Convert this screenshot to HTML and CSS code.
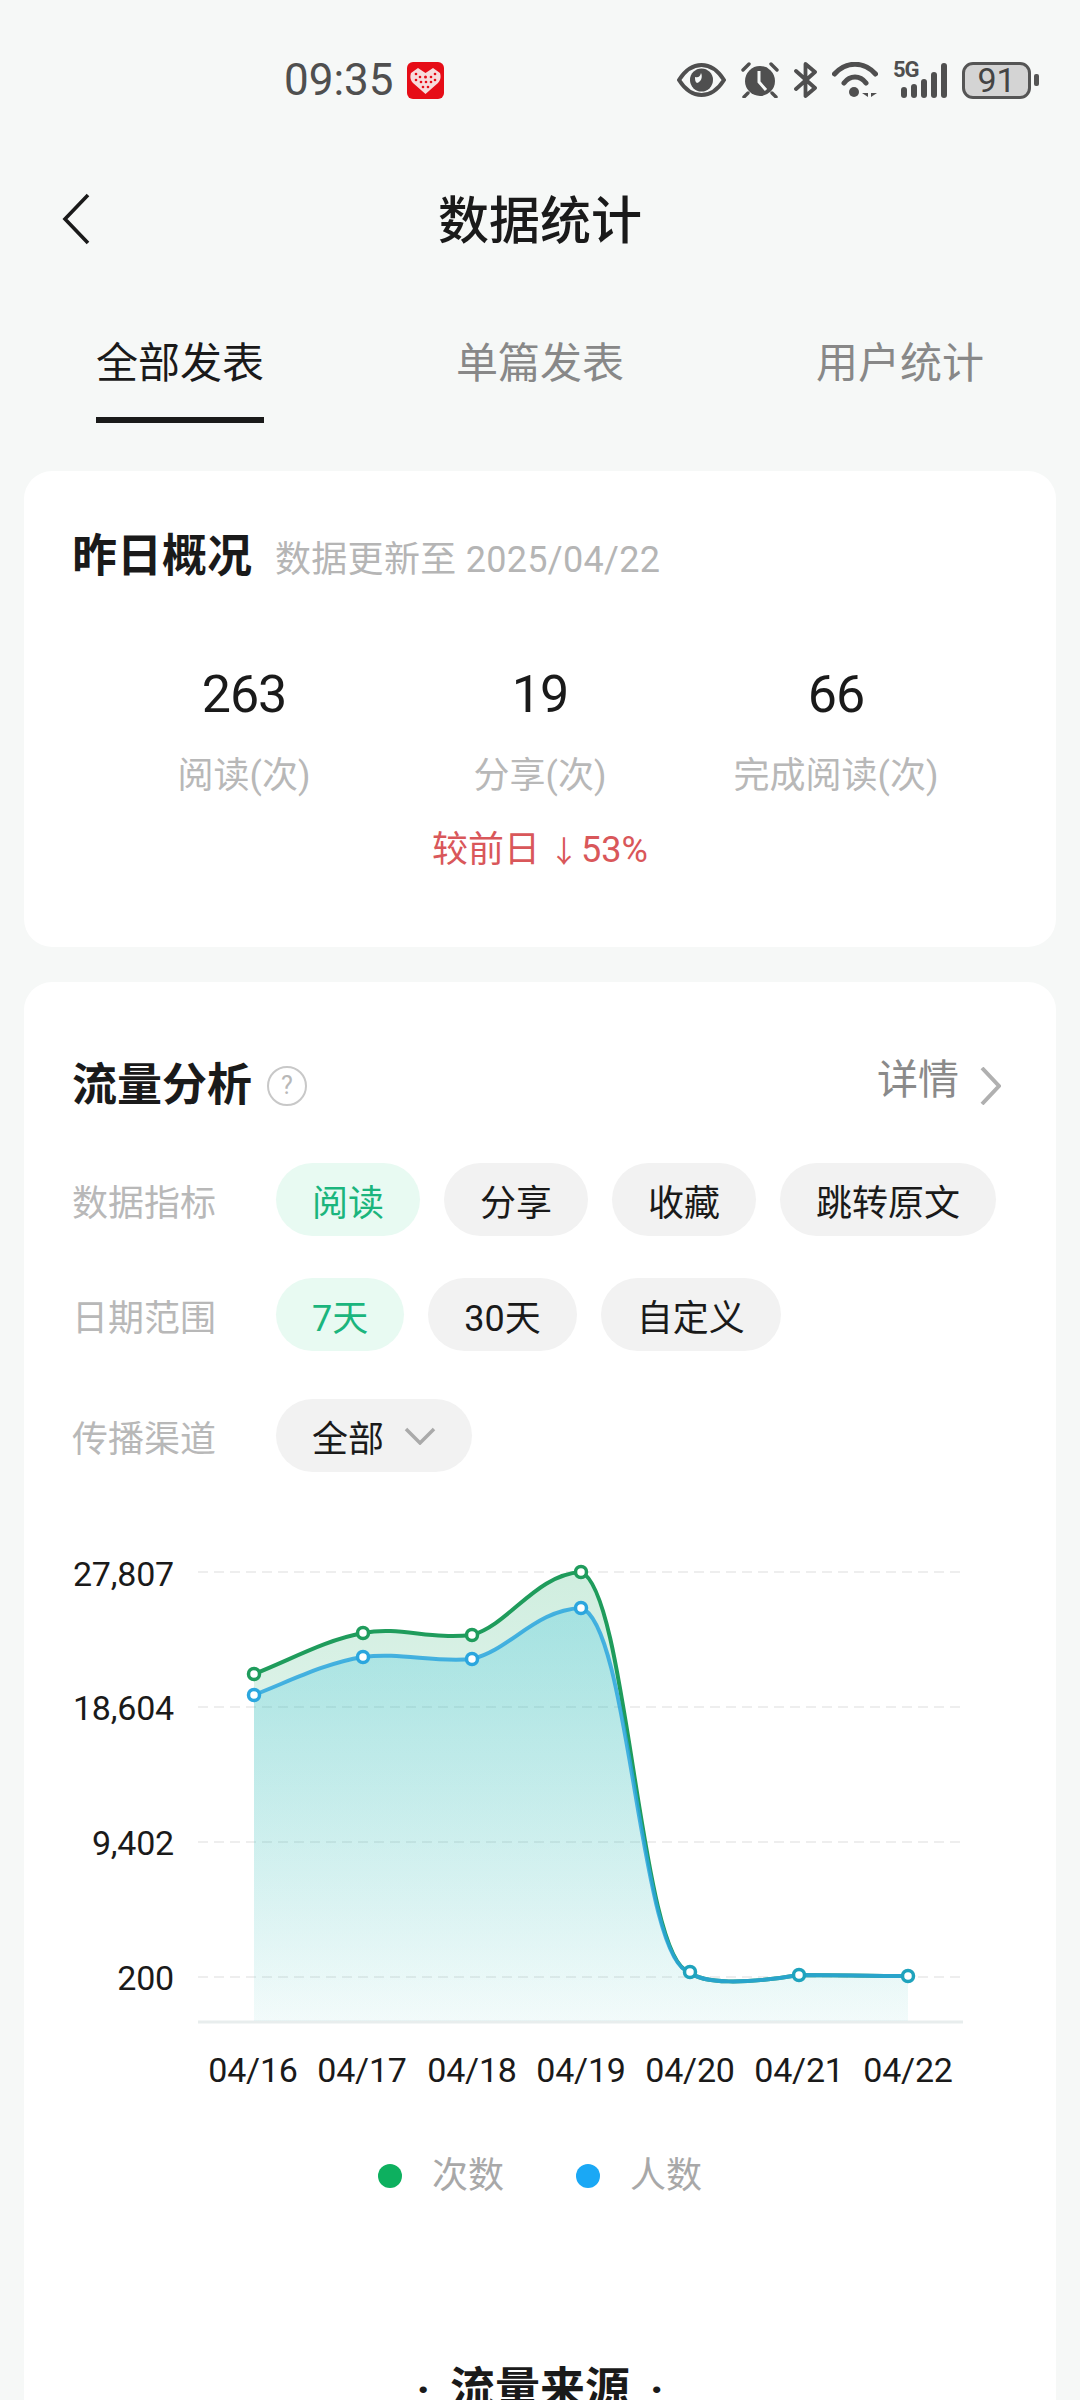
FILE: index.html
```html
<!DOCTYPE html>
<html lang="zh-CN">
<head>
    <meta charset="UTF-8">
    <meta name="viewport" content="width=device-width, initial-scale=1.0">
    <title>数据统计</title>
    <link rel="stylesheet" href="styles.css">
</head>
<body>
    <div class="status-bar">
        <div class="status-left">
            <span class="clock">09:35</span>
            <svg class="app-badge" width="37" height="37" viewBox="0 0 37 37">
                <rect width="37" height="37" rx="6" fill="#e60d17"/>
                <path d="M18.5 32 L6 21 C3 18 3 14 4 11 L11 6 L18.5 11 L26 6 L33 11 C34 14 34 18 31 21 Z" fill="#f7dcdc"/>
                <g fill="#e60d17">
                    <circle cx="9" cy="12" r="1.3"/><circle cx="13" cy="15" r="1.3"/><circle cx="18.5" cy="15" r="1.5"/>
                    <circle cx="24" cy="15" r="1.3"/><circle cx="28" cy="12" r="1.3"/><circle cx="9" cy="18" r="1.3"/>
                    <circle cx="14" cy="20" r="1.3"/><circle cx="19" cy="20" r="1.3"/><circle cx="24" cy="20" r="1.3"/>
                    <circle cx="28" cy="18" r="1.3"/><circle cx="16" cy="25" r="1.3"/><circle cx="21" cy="25" r="1.3"/>
                </g>
            </svg>
        </div>
        <div class="status-right">
            <svg width="49" height="36" viewBox="0 0 49 36">
                <path d="M2 18 C9 7 16 3 24.5 3 C33 3 40 7 47 18 C40 29 33 33 24.5 33 C16 33 9 29 2 18 Z" fill="none" stroke="#4f4f4f" stroke-width="4"/>
                <circle cx="24.5" cy="18" r="11.5" fill="#4f4f4f"/>
                <path d="M18 15 C21 16 23 15 24 11 C26 15 24 20 20 21 C18 20 18 17 18 15 Z" fill="#f6f8f7"/>
            </svg>
            <svg width="38" height="36" viewBox="0 0 38 36">
                <circle cx="19" cy="19" r="15" fill="#4f4f4f"/>
                <path d="M2 8 L8 2 M36 8 L30 2 M7 31 L3 35 M31 31 L35 35" stroke="#4f4f4f" stroke-width="3.4" stroke-linecap="round"/>
                <path d="M18 9 L18 20 L25 28" fill="none" stroke="#f6f8f7" stroke-width="3"/>
            </svg>
            <svg width="23" height="36" viewBox="0 0 23 36">
                <path d="M2 9 L21 26 L11.5 34 L11.5 2 L21 10 L2 27" fill="none" stroke="#4f4f4f" stroke-width="3.8" stroke-linejoin="round" stroke-linecap="round"/>
            </svg>
            <svg width="46" height="36" viewBox="0 0 46 36">
                <path d="M2.5 12 C14 -1 32 -1 43.5 12" fill="none" stroke="#4f4f4f" stroke-width="5" stroke-linecap="round"/>
                <path d="M12 21 C18 13 28 13 34 21" fill="none" stroke="#4f4f4f" stroke-width="5" stroke-linecap="round"/>
                <circle cx="22" cy="30" r="5" fill="#4f4f4f"/>
                <path d="M36 25 V35 L30 31 H36 Z M39 25 V35 L45 31 H39 Z" fill="#4f4f4f"/>
            </svg>
            <div class="signal">
                <span class="net-type">5G</span>
                <svg width="54" height="36" viewBox="0 0 54 36">
                    <g fill="#4f4f4f">
                        <rect x="8" y="25" width="6" height="11" rx="3"/>
                        <rect x="18" y="22" width="6" height="14" rx="3"/>
                        <rect x="28" y="17" width="6" height="19" rx="3"/>
                        <rect x="38" y="10" width="6" height="26" rx="3"/>
                        <rect x="48" y="1" width="6" height="35" rx="3"/>
                    </g>
                </svg>
            </div>
            <div class="battery">
                <span class="battery-body">91</span>
                <span class="battery-nub"></span>
            </div>
        </div>
    </div>

    <div class="nav">
        <svg class="back" width="30" height="52" viewBox="0 0 30 52">
            <path d="M27 2 L4 26 L27 50" fill="none" stroke="#1a1a1a" stroke-width="3.6"/>
        </svg>
        <h1>数据统计</h1>
    </div>

    <div class="tabs">
        <div class="tab"><span class="tab-label active">全部发表</span></div>
        <div class="tab"><span class="tab-label">单篇发表</span></div>
        <div class="tab"><span class="tab-label">用户统计</span></div>
    </div>

    <section class="card overview">
        <div class="card-head">
            <h2>昨日概况</h2>
            <span class="updated">数据更新至 2025/04/22</span>
        </div>
        <div class="stats">
            <div class="stat">
                <div class="stat-num">263</div>
                <div class="stat-label">阅读(次)</div>
            </div>
            <div class="stat">
                <div class="stat-num">19</div>
                <div class="stat-label">分享(次)</div>
            </div>
            <div class="stat">
                <div class="stat-num">66</div>
                <div class="stat-label">完成阅读(次)</div>
            </div>
        </div>
        <div class="stat-delta">较前日 <span class="arrow">↓</span>53%</div>
    </section>

    <section class="card traffic">
        <div class="traffic-head">
            <div class="card-head">
                <h2>流量分析</h2>
                <span class="help">?</span>
            </div>
            <div class="detail">
                <span class="detail-text">详情</span>
                <svg width="21" height="38" viewBox="0 0 21 38">
                    <path d="M2 1 L19 19 L2 37" fill="none" stroke="#b0b0b0" stroke-width="4"/>
                </svg>
            </div>
        </div>

        <div class="filter">
            <span class="filter-label">数据指标</span>
            <span class="pill selected">阅读</span>
            <span class="pill">分享</span>
            <span class="pill">收藏</span>
            <span class="pill">跳转原文</span>
        </div>
        <div class="filter">
            <span class="filter-label">日期范围</span>
            <span class="pill selected">7天</span>
            <span class="pill">30天</span>
            <span class="pill">自定义</span>
        </div>
        <div class="filter channel">
            <span class="filter-label">传播渠道</span>
            <span class="pill">全部
                <svg width="32" height="18" viewBox="0 0 32 18">
                    <path d="M2 2 L16 16 L30 2" fill="none" stroke="#aaa" stroke-width="3.5"/>
                </svg>
            </span>
        </div>

        <svg class="chart" width="936" height="560" viewBox="72 1540 936 560">
            <defs>
                <linearGradient id="fillGreen" x1="0" y1="0" x2="0" y2="1">
                    <stop offset="0" stop-color="#12a860" stop-opacity="0.2"/>
                    <stop offset="1" stop-color="#12a860" stop-opacity="0.02"/>
                </linearGradient>
                <linearGradient id="fillBlue" x1="0" y1="0" x2="0" y2="1">
                    <stop offset="0" stop-color="#38c4e0" stop-opacity="0.3"/>
                    <stop offset="1" stop-color="#38c4e0" stop-opacity="0.04"/>
                </linearGradient>
            </defs>

            <g class="grid">
                <line x1="198" y1="1572" x2="960" y2="1572"/>
                <line x1="198" y1="1707" x2="960" y2="1707"/>
                <line x1="198" y1="1842" x2="960" y2="1842"/>
                <line x1="198" y1="1977" x2="960" y2="1977"/>
            </g>
            <line class="axis" x1="198" y1="2022" x2="963" y2="2022"/>

            <!-- area under each series, closed down to the axis -->
            <path fill="url(#fillGreen)" d="M254 1674 C290 1660 325 1640 363 1633 C400 1626 430 1640 472 1635 C510 1624 535 1575 581 1572 C628 1590 640 1965 690 1972 C702 1984 745 1984 799 1975 C835 1975 870 1976 908 1976 L908 2021 L254 2021 Z"/>
            <path fill="url(#fillBlue)" d="M254 1695 C290 1681 325 1663 363 1657 C400 1652 435 1663 472 1659 C510 1650 535 1610 581 1608 C630 1622 640 1965 690 1972 C702 1984 745 1984 799 1975 C835 1975 870 1976 908 1976 L908 2021 L254 2021 Z"/>

            <path class="line-green" d="M254 1674 C290 1660 325 1640 363 1633 C400 1626 430 1640 472 1635 C510 1624 535 1575 581 1572 C628 1590 640 1965 690 1972 C702 1984 745 1984 799 1975 C835 1975 870 1976 908 1976"/>
            <path class="line-blue" d="M254 1695 C290 1681 325 1663 363 1657 C400 1652 435 1663 472 1659 C510 1650 535 1610 581 1608 C630 1622 640 1965 690 1972 C702 1984 745 1984 799 1975 C835 1975 870 1976 908 1976"/>

            <g class="dots-green">
                <circle cx="254" cy="1674" r="5.5"/><circle cx="363" cy="1633" r="5.5"/>
                <circle cx="472" cy="1635" r="5.5"/><circle cx="581" cy="1572" r="5.5"/>
            </g>
            <g class="dots-blue">
                <circle cx="254" cy="1695" r="5.5"/><circle cx="363" cy="1657" r="5.5"/>
                <circle cx="472" cy="1659" r="5.5"/><circle cx="581" cy="1608" r="5.5"/>
            </g>
            <g class="dots-teal">
                <circle cx="690" cy="1972" r="5.5"/><circle cx="799" cy="1975" r="5.5"/><circle cx="908" cy="1976" r="5.5"/>
            </g>

            <g class="y-labels">
                <text x="174" y="1586">27,807</text>
                <text x="174" y="1720">18,604</text>
                <text x="174" y="1855">9,402</text>
                <text x="174" y="1990">200</text>
            </g>
            <g class="x-labels">
                <text x="253" y="2082">04/16</text>
                <text x="362" y="2082">04/17</text>
                <text x="472" y="2082">04/18</text>
                <text x="581" y="2082">04/19</text>
                <text x="690" y="2082">04/20</text>
                <text x="799" y="2082">04/21</text>
                <text x="908" y="2082">04/22</text>
            </g>
        </svg>

        <div class="legend">
            <div class="legend-item"><i class="legend-dot green"></i>次数</div>
            <div class="legend-item"><i class="legend-dot blue"></i>人数</div>
        </div>

        <div class="section-title">
            <span>·</span>
            <h2>流量来源</h2>
            <span>·</span>
        </div>
    </section>
</body>
</html>
```

FILE: styles.css
```css
body {
    margin: 0;
    width: 1080px;
    height: 2400px;
    overflow: hidden;
    background-color: #f6f8f7;
    color: #1a1a1a;
    font-family: Roboto, "Noto Sans CJK SC", sans-serif;
}
h1, h2 {
    margin: 0;
}

/* status bar */
.status-bar {
    height: 160px;
    padding: 0 41px 0 284px;
    display: flex;
    justify-content: space-between;
    align-items: center;
    color: #4f4f4f;
}
.status-left {
    display: flex;
    align-items: center;
    gap: 13px;
}
.clock {
    font-size: 44px;
    line-height: 44px;
}
.status-right {
    display: flex;
    align-items: center;
    gap: 15px;
}
.status-right svg {
    display: block;
}
.signal {
    position: relative;
}
.net-type {
    position: absolute;
    left: 0;
    top: -3px;
    font-size: 22px;
    line-height: 22px;
    font-weight: 700;
    letter-spacing: -1px;
}
.battery {
    display: flex;
    align-items: center;
    gap: 3px;
}
.battery-body {
    width: 63px;
    height: 31px;
    border: 3px solid #555;
    border-radius: 11px;
    background-color: #d4d4d4;
    font-size: 34px;
    line-height: 31px;
    text-align: center;
    color: #444;
}
.battery-nub {
    width: 5px;
    height: 12px;
    border-radius: 2px;
    background-color: #555;
}

/* title bar and tabs */
.nav {
    height: 114px;
    padding-bottom: 6px;
    display: flex;
    align-items: center;
    justify-content: center;
    position: relative;
}
.nav h1 {
    font-size: 51px;
    font-weight: 500;
}
.back {
    position: absolute;
    left: 61px;
    top: 33px;
}
.tabs {
    display: grid;
    grid-template-columns: repeat(3, 360px);
    padding-top: 54px;
    margin-bottom: 48px;
}
.tab {
    text-align: center;
}
.tab-label {
    display: inline-block;
    height: 60px;
    padding-bottom: 23px;
    border-bottom: 6px solid transparent;
    font-size: 42px;
    line-height: 60px;
    color: #888;
}
.tab-label.active {
    color: #1a1a1a;
    border-bottom-color: #1a1a1a;
}

/* cards */
.card {
    margin: 0 24px;
    padding: 0 48px;
    background: #fff;
    border-radius: 28px;
}
.card-head {
    display: flex;
    align-items: center;
}
.card-head h2 {
    font-size: 45px;
    line-height: 60px;
    font-weight: 700;
}
.overview {
    height: 476px;
    box-sizing: border-box;
    padding-top: 56px;
}
.updated {
    margin-left: 23px;
    margin-bottom: 2px;
    font-size: 36px;
    letter-spacing: 0.3px;
    color: #b5b5b5;
}
.stats {
    display: grid;
    grid-template-columns: repeat(3, 296px);
    margin: 78px 24px 0;
    text-align: center;
}
.stat-num {
    font-size: 52px;
    line-height: 60px;
    letter-spacing: -1px;
}
.stat-label {
    margin-top: 27px;
    font-size: 36px;
    line-height: 48px;
    color: #b8b8b8;
}
.stat-delta {
    margin-top: 26px;
    font-size: 36px;
    line-height: 48px;
    text-align: center;
    color: #d9575a;
}
.arrow {
    font-size: 30px;
    margin-right: 2px;
}

/* traffic card */
.traffic {
    margin-top: 35px;
    padding-top: 73px;
    height: 1500px;
}
.traffic-head {
    display: flex;
    justify-content: space-between;
    align-items: center;
    margin-bottom: 46px;
}
.help {
    width: 36px;
    height: 36px;
    margin-left: 15px;
    border: 2px solid #c8c8c8;
    border-radius: 50%;
    font-size: 25px;
    line-height: 36px;
    text-align: center;
    color: #b8b8b8;
}
.detail {
    display: flex;
    align-items: center;
    gap: 21px;
    margin-right: 7px;
    color: #8a8a8a;
}
.detail-text {
    font-size: 41px;
    line-height: 50px;
    margin-bottom: 12px;
}
.filter {
    display: flex;
    align-items: center;
    gap: 24px;
    margin-bottom: 42px;
}
.filter.channel {
    margin-top: 48px;
    margin-bottom: 0;
}
.filter-label {
    width: 180px;
    font-size: 36px;
    color: #b8b8b8;
}
.pill {
    display: flex;
    align-items: center;
    gap: 20px;
    height: 73px;
    padding: 0 36px;
    border-radius: 37px;
    background-color: #f2f2f2;
    font-size: 36px;
}
.pill.selected {
    background-color: #e8faf2;
    color: #1bb57d;
}

/* chart */
.chart {
    display: block;
    margin-top: 68px;
}
.grid line {
    stroke: #eeeeee;
    stroke-width: 2;
    stroke-dasharray: 10 6;
}
.axis {
    stroke: #e8eded;
    stroke-width: 3;
}
.line-green, .line-blue {
    fill: none;
    stroke-width: 4;
}
.line-green {
    stroke: #1f9c5c;
}
.line-blue {
    stroke: #2ba6de;
    stroke-opacity: 0.85;
}
.dots-green circle, .dots-blue circle, .dots-teal circle {
    fill: #fff;
    stroke-width: 3.5;
}
.dots-green circle {
    stroke: #1f9c5c;
}
.dots-blue circle {
    stroke: #2ba6de;
}
.dots-teal circle {
    stroke: #1fa3bd;
}
.y-labels text, .x-labels text {
    font-size: 34px;
    letter-spacing: -0.2px;
    fill: #1a1a1a;
}
.y-labels text {
    text-anchor: end;
}
.x-labels text {
    text-anchor: middle;
}

.legend {
    display: flex;
    justify-content: center;
    gap: 72px;
    margin-top: 52px;
}
.legend-item {
    display: flex;
    align-items: center;
    gap: 30px;
    font-size: 36px;
    line-height: 48px;
    color: #a8a8a8;
}
.legend-dot {
    width: 24px;
    height: 24px;
    border-radius: 50%;
}
.legend-dot.green {
    background-color: #0db05f;
}
.legend-dot.blue {
    background-color: #1aa8f5;
}

.section-title {
    display: flex;
    justify-content: center;
    align-items: center;
    gap: 20px;
    margin-top: 160px;
    font-size: 45px;
    line-height: 60px;
    font-weight: 700;
}
.section-title h2 {
    font-size: 45px;
    font-weight: 700;
}
```
